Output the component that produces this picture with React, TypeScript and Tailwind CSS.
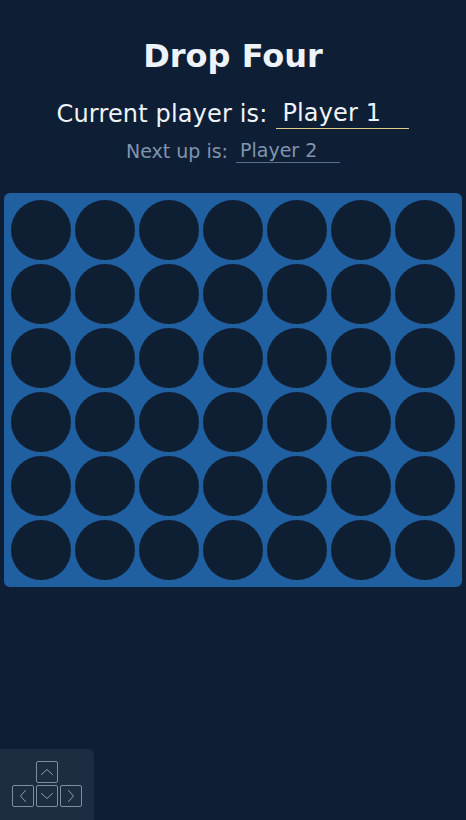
import React, { useState } from "react";

const ROWS = 6;
const COLS = 7;

const Chevron = ({ dir }: { dir: "up" | "down" | "left" | "right" }) => {
  const paths = {
    up: "M1.5 9.5 L7 4.5 L12.5 9.5",
    down: "M1.5 4.5 L7 9.5 L12.5 4.5",
    left: "M9.5 1.5 L4.5 7 L9.5 12.5",
    right: "M4.5 1.5 L9.5 7 L4.5 12.5",
  };
  return (
    <svg width="14" height="14" viewBox="0 0 14 14" fill="none">
      <path d={paths[dir]} stroke="#8fa0b5" strokeWidth="1" strokeLinecap="round" strokeLinejoin="round" />
    </svg>
  );
};

const Key = ({ dir }: { dir: "up" | "down" | "left" | "right" }) => (
  <div className="w-[22px] h-[22px] border border-[#7d8ea3] rounded-[2px] flex items-center justify-center">
    <Chevron dir={dir} />
  </div>
);

const App: React.FC = () => {
  const [current] = useState("Player 1");
  const [next] = useState("Player 2");

  return (
    <div
      className="min-h-[820px] h-[820px] bg-[#0e1f35] text-[#eef3f9] flex flex-col items-center relative overflow-hidden"
      style={{ fontFamily: '"DejaVu Sans", Verdana, sans-serif' }}
    >
      <h1 className="mt-[36px] text-[32px] leading-[40px] font-bold text-[#eef3f9]">Drop Four</h1>

      {/* Player info */}
      <div className="mt-[22px] flex items-end text-[24px] leading-[30px] tracking-[0.15px]">
        <span>Current player is:</span>
        <span className="ml-[9px] w-[133px] border-b border-[#e3cc8a] pl-[6px]">{current}</span>
      </div>
      <div className="mt-[9px] flex items-end text-[19px] leading-[24px] text-[#8094ad]">
        <span>Next up is:</span>
        <span className="ml-[8px] w-[104px] border-b border-[#5a6f8c] pl-[4px]">{next}</span>
      </div>

      {/* Board */}
      <div className="mt-[30px] w-[458px] bg-[#2160a0] rounded-[6px] p-[7px] grid grid-cols-7 gap-[4px]">
        {Array.from({ length: ROWS * COLS }).map((_, i) => (
          <div key={i} className="w-[60px] h-[60px] rounded-full bg-[#0e1f33]" />
        ))}
      </div>

      {/* Keyboard hint */}
      <div className="absolute left-0 bottom-0 w-[94px] h-[71px] bg-[#1c2c41] rounded-tr-[6px] pt-[12px] pl-[12px] flex flex-col gap-[2px]">
        <div className="flex gap-[2px] pl-[24px]">
          <Key dir="up" />
        </div>
        <div className="flex gap-[2px]">
          <Key dir="left" />
          <Key dir="down" />
          <Key dir="right" />
        </div>
      </div>
    </div>
  );
};

export default App;
